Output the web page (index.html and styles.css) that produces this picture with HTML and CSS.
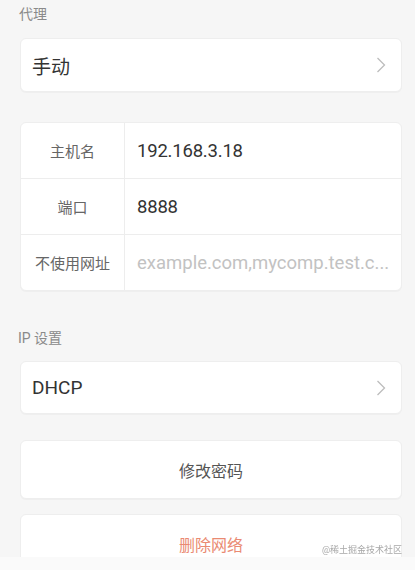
FILE: index.html
```html
<!DOCTYPE html>
<html lang="zh-CN">
<head>
    <meta charset="UTF-8">
    <meta name="viewport" content="width=device-width, initial-scale=1.0">
    <title>代理设置</title>
    <link rel="stylesheet" href="styles.css">
</head>
<body>
    <div id="page">
        <div class="section-title">代理</div>
        <div class="card select-row">
            <span class="select-value">手动</span>
            <svg class="chevron" width="10" height="16" viewBox="0 0 10 16"><path d="M1.5 1 L8.5 8 L1.5 15" fill="none" stroke="#bdbdbd" stroke-width="1.3"/></svg>
        </div>

        <div class="card form-card">
            <div class="form-row">
                <div class="form-label">主机名</div>
                <div class="form-value">192.168.3.18</div>
            </div>
            <div class="form-row">
                <div class="form-label">端口</div>
                <div class="form-value">8888</div>
            </div>
            <div class="form-row">
                <div class="form-label">不使用网址</div>
                <div class="form-value placeholder">example.com,mycomp.test.c...</div>
            </div>
        </div>

        <div class="section-title ip-title">IP 设置</div>
        <div class="card select-row dhcp-row">
            <span class="select-value">DHCP</span>
            <svg class="chevron" width="10" height="16" viewBox="0 0 10 16"><path d="M1.5 1 L8.5 8 L1.5 15" fill="none" stroke="#bdbdbd" stroke-width="1.3"/></svg>
        </div>

        <div class="card action-btn">修改密码</div>
        <div class="card action-btn danger">删除网络</div>
    </div>
    <div id="bottomBar"></div>
    <div id="watermark">@稀土掘金技术社区</div>
</body>
</html>
```

FILE: styles.css
```css
body, html {
    margin: 0;
    padding: 0;
    width: 100%;
    height: 100%;
    overflow: hidden;
    font-family: Roboto, "Noto Sans CJK SC", sans-serif;
    background-color: #f6f6f6;
}
#page {
    padding: 0 13px 0 20px;
}
.section-title {
    font-size: 14px;
    color: #8a8a8a;
    height: 38px;
    line-height: 28px;
    margin-left: -1px;
}
.ip-title {
    height: 70px;
    line-height: 94px;
    margin-left: -2px;
}
.card {
    background-color: #ffffff;
    border: 1px solid #eeeeee;
    border-radius: 6px;
    box-sizing: border-box;
    box-shadow: 0 1px 1px rgba(0, 0, 0, 0.03);
}
.select-row {
    height: 54px;
    display: flex;
    align-items: center;
    justify-content: space-between;
    padding: 0 15px 0 11px;
}
.dhcp-row {
    height: 53px;
}
.select-value {
    font-size: 19px;
    color: #333333;
}
.chevron {
    display: block;
}
.form-card {
    margin-top: 30px;
    overflow: hidden;
}
.form-row {
    display: flex;
    height: 55px;
    border-top: 1px solid #ededed;
}
.form-row:first-child {
    border-top: none;
}
.form-label {
    width: 103px;
    flex-shrink: 0;
    border-right: 1px solid #ededed;
    display: flex;
    align-items: center;
    justify-content: center;
    font-size: 15px;
    color: #666666;
}
.form-value {
    flex: 1;
    min-width: 0;
    display: flex;
    align-items: center;
    padding-left: 12px;
    font-size: 18.5px;
    letter-spacing: -0.2px;
    color: #333333;
}
.form-value.placeholder {
    font-size: 18.5px;
    letter-spacing: 0;
    color: #c2c2c2;
    white-space: nowrap;
}
.action-btn {
    margin-top: 26px;
    height: 59px;
    display: flex;
    align-items: center;
    justify-content: center;
    font-size: 16px;
    color: #555555;
}
.action-btn.danger {
    margin-top: 15px;
    color: #ea8a72;
}
#bottomBar {
    position: fixed;
    left: 0;
    right: 0;
    bottom: 0;
    height: 13px;
    background-color: #fafafa;
}
#watermark {
    position: fixed;
    right: 13px;
    bottom: 14px;
    font-size: 9px;
    color: #a8a8a8;
}
```
